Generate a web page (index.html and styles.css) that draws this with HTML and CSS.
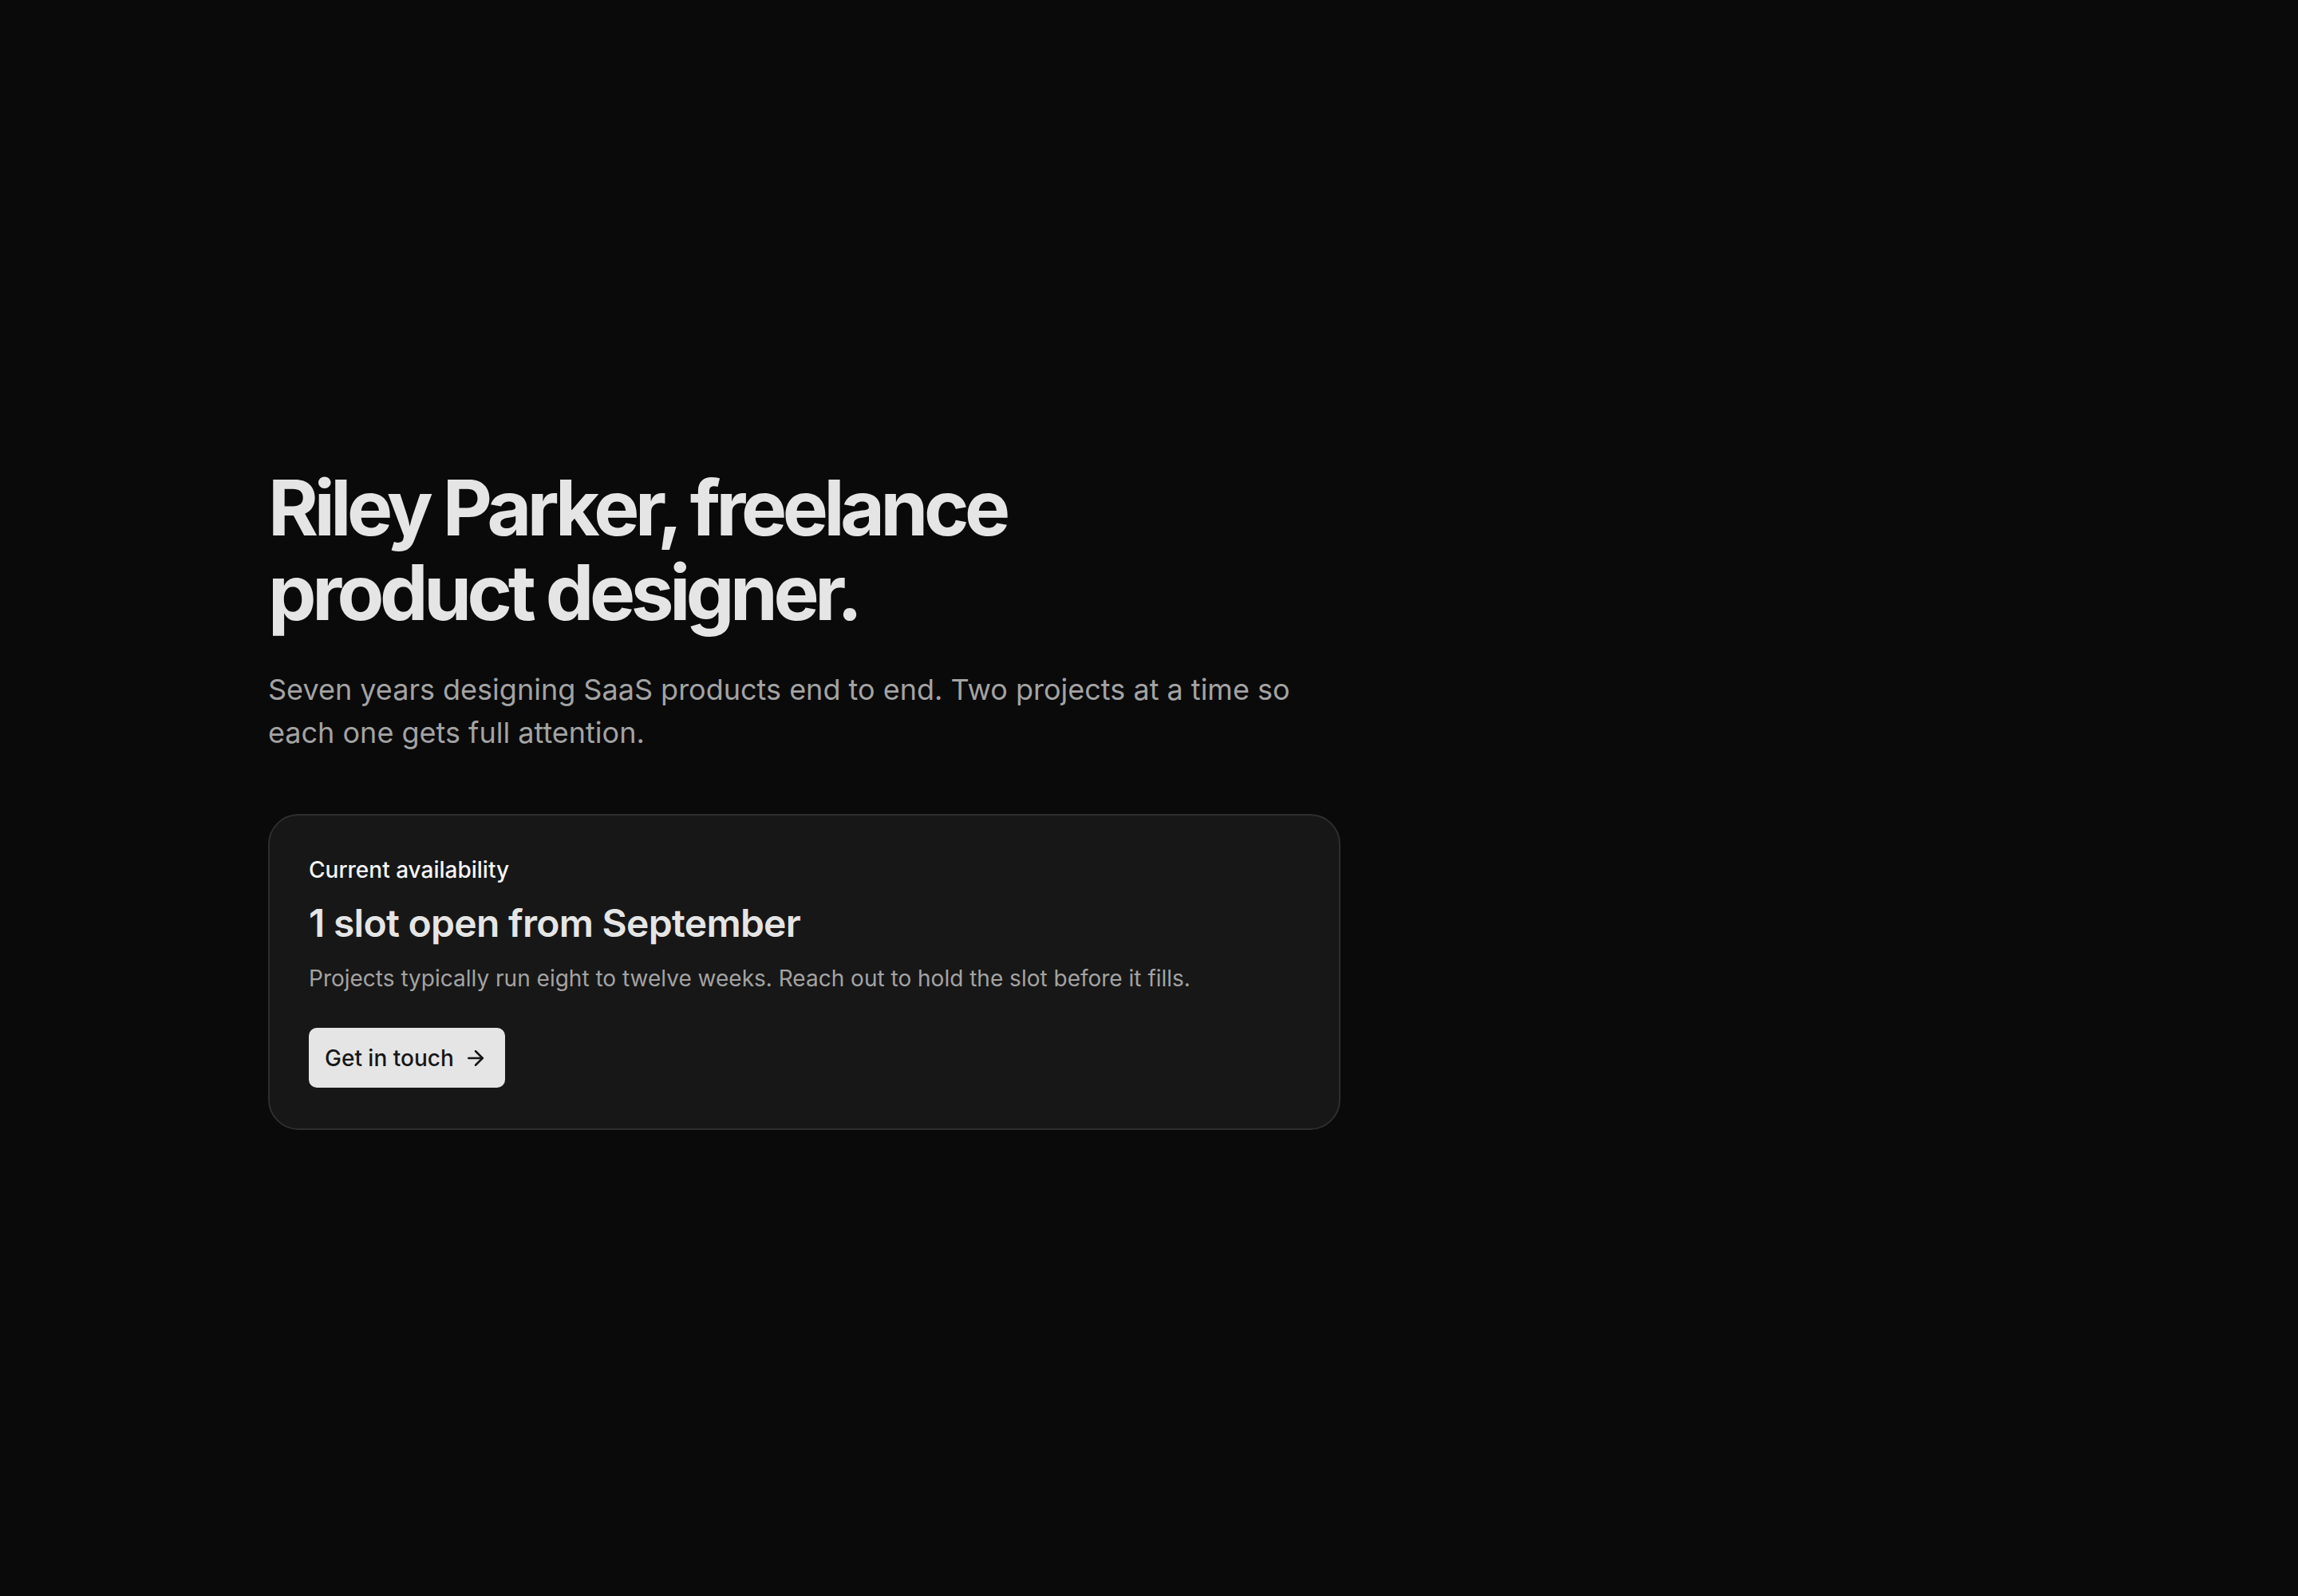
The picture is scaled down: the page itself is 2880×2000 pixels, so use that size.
FILE: index.html
```html
<!DOCTYPE html>
<html lang="en">
<head>
  <meta charset="UTF-8">
  <title>Riley Parker — Product Designer</title>
  <link rel="stylesheet" href="styles.css">
</head>
<body>

  <main class="page">
    <section class="intro">
      <h1>Riley Parker, freelance<br>product designer.</h1>
      <p class="lead">Seven years designing SaaS products end to end. Two projects at a time so each one gets full attention.</p>

      <div class="card">
        <div class="card-label">Current availability</div>
        <h2 class="card-title">1 slot open from September</h2>
        <p class="card-text">Projects typically run eight to twelve weeks. Reach out to hold the slot before it fills.</p>
        <a class="btn" href="#contact">
          Get in touch
          <svg class="btn-icon" viewBox="0 0 24 24" fill="none" stroke="currentColor" stroke-width="2" stroke-linecap="round" stroke-linejoin="round">
            <path d="M5 12h14"/>
            <path d="m12 5 7 7-7 7"/>
          </svg>
        </a>
      </div>
    </section>
  </main>

</body>
</html>
```

FILE: styles.css
```css
* {
  box-sizing: border-box;
  margin: 0;
  padding: 0;
}

body {
  background: #0a0a0a;
  font-family: Inter, 'Noto Sans', 'Liberation Sans', sans-serif;
  color: #e5e5e5;
}

.page {
  min-height: 100vh;
  display: flex;
  flex-direction: column;
  justify-content: center;
  padding: 0 336px;
}

.intro {
  max-width: 1344px;
}

h1 {
  font-size: 96px;
  line-height: 1.1;
  font-weight: 700;
  letter-spacing: -0.056em;
  color: #e5e5e5;
}

.lead {
  margin-top: 42px;
  font-size: 36px;
  line-height: 54px;
  color: #a3a3a3;
}

/* availability card */
.card {
  margin-top: 75px;
  background: #171717;
  border: 2px solid #2e2e2e;
  border-radius: 38px;
  padding: 47px 48px 51px 49px;
}

.card-label {
  font-size: 28px;
  line-height: 1.5;
  font-weight: 500;
  color: #f5f5f5;
}

.card-title {
  margin-top: 16px;
  font-size: 48px;
  line-height: 1.25;
  font-weight: 600;
  letter-spacing: -0.015em;
  color: #e5e5e5;
}

.card-text {
  margin-top: 18px;
  font-size: 28px;
  line-height: 1.5;
  color: #a3a3a3;
}

.btn {
  margin-top: 41px;
  display: inline-flex;
  align-items: center;
  gap: 12px;
  padding: 16.5px 22px 16.5px 20px;
  background: #e5e5e5;
  color: #171717;
  border-radius: 10px;
  font-size: 28px;
  line-height: 1.5;
  font-weight: 500;
  text-decoration: none;
}

.btn-icon {
  width: 30px;
  height: 30px;
}
```
